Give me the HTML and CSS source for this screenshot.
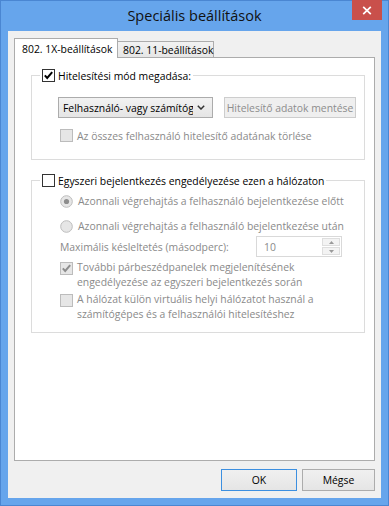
FILE: index.html
```html
<!DOCTYPE html>
<html lang="hu">
<head>
<meta charset="utf-8">
<title>Speciális beállítások</title>
<link rel="stylesheet" href="styles.css">
</head>
<body>
<div class="window">
  <div class="titlebar">
    <div class="title">Speciális beállítások</div>
    <div class="close">
      <svg width="10" height="9" viewBox="0 0 10 9"><path d="M1.2 0.8 L8.8 8.2 M8.8 0.8 L1.2 8.2" stroke="#fff" stroke-width="1.7" fill="none"/></svg>
    </div>
  </div>
  <div class="client">
    <div class="tabs">
      <div class="tab active">802. 1X-beállítások</div>
      <div class="tab second">802. 11-beállítások</div>
    </div>
    <div class="panel">
      <div class="group g1">
        <div class="group-title">
          <svg class="ico" width="13" height="13" viewBox="0 0 13 13"><rect x=".5" y=".5" width="12" height="12" fill="#fff" stroke="#333"/><path d="M2.8 6.4 L5.2 9 L10.2 3.2" stroke="#000" stroke-width="2" fill="none"/></svg>
          <span>Hitelesítési mód megadása:</span>
        </div>
        <div class="g1-body">
          <div class="combo-row">
            <div class="combo">
              <span class="combo-text">Felhasználó- vagy számítógép</span>
              <svg class="chev" width="8" height="5" viewBox="0 0 8 5"><path d="M0.8 0.8 L4 4 L7.2 0.8" stroke="#333" stroke-width="1.5" fill="none"/></svg>
            </div>
            <div class="btn disabled save">Hitelesítő adatok mentése</div>
          </div>
          <div class="check-row dis indent">
            <svg class="ico" width="13" height="13" viewBox="0 0 13 13"><rect x=".5" y=".5" width="12" height="12" fill="#e6e6e6" stroke="#bcbcbc"/></svg>
            <span>Az összes felhasználó hitelesítő adatának törlése</span>
          </div>
        </div>
      </div>

      <div class="group g2">
        <div class="group-title">
          <svg class="ico" width="13" height="13" viewBox="0 0 13 13"><rect x=".5" y=".5" width="12" height="12" fill="#fff" stroke="#333"/></svg>
          <span>Egyszeri bejelentkezés engedélyezése ezen a hálózaton</span>
        </div>
        <div class="g2-body">
          <div class="check-row dis r1">
            <svg class="ico" width="13" height="13" viewBox="0 0 13 13"><circle cx="6.5" cy="6.5" r="5.8" fill="#e6e6e6" stroke="#bcbcbc"/><circle cx="6.5" cy="6.5" r="2.6" fill="#8d8d8d"/></svg>
            <span>Azonnali végrehajtás a felhasználó bejelentkezése előtt</span>
          </div>
          <div class="check-row dis r2">
            <svg class="ico" width="13" height="13" viewBox="0 0 13 13"><circle cx="6.5" cy="6.5" r="5.8" fill="#e6e6e6" stroke="#bcbcbc"/></svg>
            <span>Azonnali végrehajtás a felhasználó bejelentkezése után</span>
          </div>
          <div class="delay-row dis">
            <span class="delay-label">Maximális késleltetés (másodperc):</span>
            <div class="spin">
              <span class="spin-val">10</span>
              <div class="spin-btns">
                <div class="spin-btn"><svg width="5" height="3" viewBox="0 0 5 3"><path d="M0 3 L2.5 0 L5 3Z" fill="#9a9a9a"/></svg></div>
                <div class="spin-btn"><svg width="5" height="3" viewBox="0 0 5 3"><path d="M0 0 L2.5 3 L5 0Z" fill="#9a9a9a"/></svg></div>
              </div>
            </div>
          </div>
          <div class="check-row multi dis c3">
            <svg class="ico" width="13" height="13" viewBox="0 0 13 13"><rect x=".5" y=".5" width="12" height="12" fill="#e6e6e6" stroke="#bcbcbc"/><path d="M2.8 6.4 L5.2 9 L10.2 3.2" stroke="#8d8d8d" stroke-width="2" fill="none"/></svg>
            <span>További párbeszédpanelek megjelenítésének<br>engedélyezése az egyszeri bejelentkezés során</span>
          </div>
          <div class="check-row multi dis c4">
            <svg class="ico" width="13" height="13" viewBox="0 0 13 13"><rect x=".5" y=".5" width="12" height="12" fill="#e6e6e6" stroke="#bcbcbc"/></svg>
            <span>A hálózat külön virtuális helyi hálózatot használ a<br>számítógépes és a felhasználói hitelesítéshez</span>
          </div>
        </div>
      </div>
    </div>
    <div class="buttons">
      <div class="btn default ok">OK</div>
      <div class="btn cancel">Mégse</div>
    </div>
  </div>
</div>
</body>
</html>
```
FILE: styles.css
```css
* { box-sizing: border-box; }
html, body { margin: 0; padding: 0; }
body {
  width: 389px;
  height: 506px;
  overflow: hidden;
  font-family: "Open Sans", "Noto Sans", "DejaVu Sans", sans-serif;
  font-size: 10.4px;
  color: #000;
}
.window {
  width: 389px;
  height: 506px;
  background: #66a5ec;
  box-shadow: inset 0 0 0 1px #4a86d2;
  display: flex;
  flex-direction: column;
}
.titlebar {
  height: 31px;
  flex: none;
  display: grid;
  grid-template-columns: 1fr auto 1fr;
}
.title {
  grid-column: 2;
  font-size: 14.5px;
  line-height: 31px;
  color: #111;
}
.close {
  grid-column: 3;
  justify-self: end;
  align-self: start;
  width: 30px;
  height: 20px;
  margin-right: 7px;
  background: #c9504b;
  display: flex;
  align-items: center;
  justify-content: center;
}
.client {
  flex: 1;
  margin: 0 8px 8px;
  background: #f0f0f0;
  padding: 7px 6px 0;
  display: flex;
  flex-direction: column;
}
.tabs {
  display: flex;
  align-items: flex-end;
  height: 20px;
  margin-bottom: -1px;
  position: relative;
  z-index: 1;
}
.tab {
  height: 17px;
  border: 1px solid #acacac;
  background: linear-gradient(#f2f2f2, #e6e6e6);
  display: flex;
  align-items: center;
  white-space: nowrap;
}
.tab.active {
  width: 104px;
  height: 20px;
  border-bottom: none;
  background: #fff;
  padding-left: 7px;
  position: relative;
  z-index: 2;
}
.tab.second {
  width: 97px;
  margin-left: -1px;
  padding-left: 5px;
}
.panel {
  height: 404px;
  flex: none;
  background: #fff;
  border: 1px solid #acacac;
}
.group {
  border: 1px solid #dcdcdc;
  margin: 0 9px 0 16px;
}
.g1 { margin-top: 17px; }
.g2 { margin-top: 20px; }
.group-title {
  display: flex;
  align-items: center;
  gap: 3px;
  height: 15px;
  width: max-content;
  margin: -8px 0 0 8px;
  padding: 0 2px;
  background: #fff;
  white-space: nowrap;
}
.ico { flex: none; display: block; }
.g1-body {
  padding: 14px 0 16px 26px;
}
.combo-row {
  display: flex;
  align-items: center;
  gap: 11px;
}
.combo {
  width: 155px;
  height: 21px;
  border: 1px solid #acacac;
  background: linear-gradient(#f2f2f2, #e5e5e5);
  display: flex;
  align-items: center;
  padding: 0 7px 0 4px;
  gap: 4px;
}
.combo-text {
  flex: 1;
  overflow: hidden;
  white-space: nowrap;
}
.chev { flex: none; }
.btn {
  height: 22px;
  border: 1px solid #acacac;
  background: linear-gradient(#f0f0f0, #e5e5e5);
  display: flex;
  align-items: center;
  justify-content: center;
  white-space: nowrap;
}
.btn.disabled {
  background: #efefef;
  border-color: #cdcdcd;
  color: #8d8d8d;
}
.save { width: 132px; height: 21px; padding: 0; }
.check-row {
  display: flex;
  align-items: center;
  gap: 4px;
  height: 15px;
  white-space: nowrap;
}
.dis { color: #8a8a8a; }
.indent { margin: 10px 0 0 2px; }
.g2-body {
  padding: 5px 0 10px 28px;
}
.r1 { height: 16px; gap: 5px; }
.r2 { height: 16px; margin-top: 9px; gap: 5px; }
.delay-row {
  display: flex;
  align-items: center;
  height: 21px;
  margin-top: 2px;
}
.delay-label { width: 196px; white-space: nowrap; }
.spin {
  width: 86px;
  height: 21px;
  border: 1px solid #d9d9d9;
  background: #fff;
  display: flex;
  align-items: center;
  padding: 1px 1px 1px 7px;
}
.spin-val { flex: 1; }
.spin-btns {
  width: 18px;
  height: 100%;
  display: flex;
  flex-direction: column;
  gap: 1px;
}
.spin-btn {
  flex: 1;
  border: 1px solid #dedede;
  background: #f3f3f3;
  display: flex;
  align-items: center;
  justify-content: center;
}
.spin-btn svg { display: block; }
.check-row.multi {
  height: auto;
  align-items: flex-start;
  line-height: 15px;
}
.check-row.multi .ico { margin-top: 2px; }
.c3 { margin-top: 3px; }
.c4 { margin-top: 2px; }
.buttons {
  display: flex;
  justify-content: flex-end;
  gap: 5px;
  margin-top: 8px;
}
.ok { width: 76px; border-color: #3c8fe0; }
.cancel { width: 73px; }
```
